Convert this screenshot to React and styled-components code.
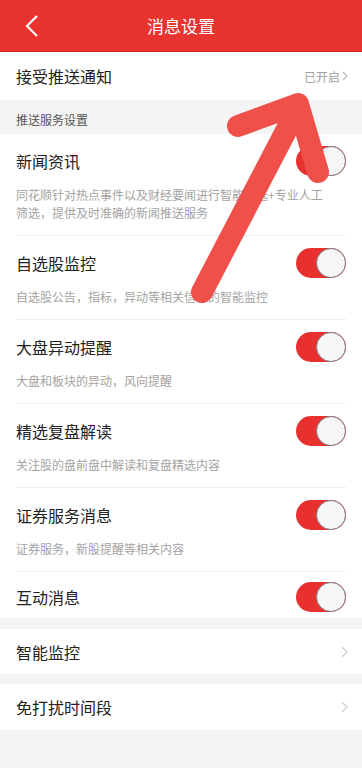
import styled, { createGlobalStyle } from "styled-components";

const GlobalStyle = createGlobalStyle`
  html, body {
    margin: 0;
    padding: 0;
    background: #f4f4f4;
    font-family: "Noto Sans CJK SC", "Noto Sans", sans-serif;
  }
`;

const Page = styled.div`
  position: relative;
  width: 362px;
  min-height: 768px;
  background: #f4f4f4;
  overflow: hidden;
`;

const Header = styled.div`
  height: 51px;
  background: #e8332f;
  border-bottom: 1px solid #d12a26;
  display: flex;
  align-items: center;
  justify-content: center;
  position: relative;
  color: #fff;
  font-size: 17px;
`;

const BackButton = styled.div`
  position: absolute;
  left: 22px;
  top: 14px;
  width: 20px;
  height: 24px;
`;

const Row = styled.div`
  height: ${(p) => p.$h || 48}px;
  background: #fff;
  display: flex;
  align-items: center;
  justify-content: space-between;
  padding: 0 14px 0 16px;
  margin-top: ${(p) => p.$gap || 0}px;
`;

const Title = styled.div`
  font-size: 16px;
  line-height: 22px;
  color: #222;
`;

const Status = styled.div`
  display: flex;
  align-items: center;
  gap: 2px;
  font-size: 12px;
  color: #a0a0a0;
`;

const SectionHead = styled.div`
  height: 34px;
  box-sizing: border-box;
  padding: 10px 16px 0;
  font-size: 12px;
  line-height: 20px;
  color: #555;
`;

const List = styled.div`
  background: #fff;
`;

const Item = styled.div`
  margin: 0 16px;
  padding: ${(p) => (p.$single ? "14px 0 10px" : "16px 0 13px")};
  border-bottom: ${(p) => (p.$last ? "none" : "1px solid #eeeeee")};
  display: flex;
  flex-direction: column;
`;

const ItemTop = styled.div`
  display: flex;
  align-items: center;
  justify-content: space-between;
`;

const Desc = styled.div`
  margin-top: 14px;
  font-size: 12px;
  line-height: 18px;
  color: #a3a3a3;
  padding-right: 12px;
`;

const Toggle = styled.div`
  width: 50px;
  height: 30px;
  border-radius: 15px;
  background: #e8312f;
  position: relative;
  margin: -4px 0;
`;

const Knob = styled.div`
  position: absolute;
  right: 0;
  top: 0;
  width: 30px;
  height: 30px;
  box-sizing: border-box;
  border-radius: 50%;
  background: #f6f6f6;
  border: 1px solid #7e7e7e;
`;

const Arrow = styled.svg`
  position: absolute;
  left: 0;
  top: 0;
  pointer-events: none;
`;

const Chevron = ({ color = "#c8c8c8", size = 10 }) => (
  <svg width={size * 0.6} height={size} viewBox="0 0 6 10">
    <path d="M1 1 L5 5 L1 9" fill="none" stroke={color} strokeWidth="1.1" />
  </svg>
);

const items = [
  {
    title: "新闻资讯",
    desc: "同花顺针对热点事件以及财经要闻进行智能筛选+专业人工筛选，提供及时准确的新闻推送服务",
  },
  { title: "自选股监控", desc: "自选股公告，指标，异动等相关信息的智能监控" },
  { title: "大盘异动提醒", desc: "大盘和板块的异动，风向提醒" },
  { title: "精选复盘解读", desc: "关注股的盘前盘中解读和复盘精选内容" },
  { title: "证券服务消息", desc: "证券服务，新股提醒等相关内容" },
  { title: "互动消息" },
];

export default function App() {
  return (
    <Page>
      <GlobalStyle />
      <Header>
        <BackButton>
          <svg width="20" height="24" viewBox="0 0 20 24">
            <path d="M15 2 L5 12 L15 22" fill="none" stroke="#fff" strokeWidth="2.2" />
          </svg>
        </BackButton>
        消息设置
      </Header>
      <Row>
        <Title>接受推送通知</Title>
        <Status>
          已开启
          <Chevron color="#b5b5b5" size={10} />
        </Status>
      </Row>
      <SectionHead>推送服务设置</SectionHead>
      <List>
        {items.map((it, i) => (
          <Item key={it.title} $single={!it.desc} $last={i === items.length - 1}>
            <ItemTop>
              <Title>{it.title}</Title>
              <Toggle>
                <Knob />
              </Toggle>
            </ItemTop>
            {it.desc && <Desc>{it.desc}</Desc>}
          </Item>
        ))}
      </List>
      <Row $gap={11} $h={45}>
        <Title>智能监控</Title>
        <Chevron color="#d0d0d0" size={12} />
      </Row>
      <Row $gap={10} $h={46}>
        <Title>免打扰时间段</Title>
        <Chevron color="#d0d0d0" size={12} />
      </Row>
      <Arrow width="362" height="768" viewBox="0 0 362 768">
        <path
          d="M202 292 L298 108 M238 126 L298 104 L318 172"
          fill="none"
          stroke="#f0504a"
          strokeWidth="22"
          strokeLinecap="round"
          strokeLinejoin="round"
        />
      </Arrow>
    </Page>
  );
}
